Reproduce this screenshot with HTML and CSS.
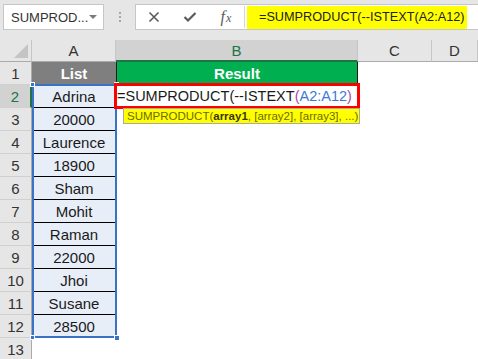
FILE: index.html
```html
<!DOCTYPE html>
<html lang="en">
<head>
    <meta charset="UTF-8">
    <title>SUMPRODUCT ISTEXT</title>
    <link rel="stylesheet" href="styles.css">
</head>
<body>

    <div class="toolbar">
        <div class="name-box">SUMPROD...<span class="caret"></span></div>
        <div class="grip"><span></span><span></span><span></span></div>
        <div class="formula-box">
            <div class="fx-btn">
                <svg width="12" height="12" viewBox="0 0 12 12"><path d="M1.5 1.5 L10.5 10.5 M10.5 1.5 L1.5 10.5" stroke="#5a5a5a" stroke-width="1.6" fill="none"/></svg>
            </div>
            <div class="fx-btn">
                <svg width="14" height="12" viewBox="0 0 14 12"><path d="M1.5 6 L5 9.5 L12.5 2" stroke="#5a5a5a" stroke-width="2.2" fill="none"/></svg>
            </div>
            <div class="fx-btn fx-text"><i>f</i><i class="sub">x</i></div>
            <div class="sep"></div>
            <div class="formula-hl">=SUMPRODUCT(--ISTEXT(A2:A12)</div>
        </div>
    </div>

    <div class="sheet">
        <div class="corner"></div>
        <div class="col-head">A</div>
        <div class="col-head active">B</div>
        <div class="col-head">C</div>
        <div class="col-head">D</div>

        <div class="row-head">1</div>
        <div class="cell head-grey">List</div>
        <div class="cell head-green">Result</div>
        <div class="cell"></div>
        <div class="cell"></div>

        <div class="row-head active">2</div>
        <div class="cell list">Adrina</div>
        <div class="cell editing">
            <span>=SUMPRODUCT(--ISTEXT<span class="paren">(</span><span class="ref">A2:A12</span><span class="paren">)</span></span>
            <div class="tip">SUMPRODUCT(<b>array1</b>, [array2], [array3], ...)</div>
        </div>
        <div class="cell"></div>
        <div class="cell"></div>

        <div class="row-head">3</div>
        <div class="cell list">20000</div>
        <div class="cell"></div><div class="cell"></div><div class="cell"></div>

        <div class="row-head">4</div>
        <div class="cell list">Laurence</div>
        <div class="cell"></div><div class="cell"></div><div class="cell"></div>

        <div class="row-head">5</div>
        <div class="cell list">18900</div>
        <div class="cell"></div><div class="cell"></div><div class="cell"></div>

        <div class="row-head">6</div>
        <div class="cell list">Sham</div>
        <div class="cell"></div><div class="cell"></div><div class="cell"></div>

        <div class="row-head">7</div>
        <div class="cell list">Mohit</div>
        <div class="cell"></div><div class="cell"></div><div class="cell"></div>

        <div class="row-head">8</div>
        <div class="cell list">Raman</div>
        <div class="cell"></div><div class="cell"></div><div class="cell"></div>

        <div class="row-head">9</div>
        <div class="cell list">22000</div>
        <div class="cell"></div><div class="cell"></div><div class="cell"></div>

        <div class="row-head">10</div>
        <div class="cell list">Jhoi</div>
        <div class="cell"></div><div class="cell"></div><div class="cell"></div>

        <div class="row-head">11</div>
        <div class="cell list">Susane</div>
        <div class="cell"></div><div class="cell"></div><div class="cell"></div>

        <div class="row-head">12</div>
        <div class="cell list">28500</div>
        <div class="cell"></div><div class="cell"></div><div class="cell"></div>

        <div class="row-head">13</div>
        <div class="cell"></div>
        <div class="cell"></div><div class="cell"></div><div class="cell"></div>

        <!-- range reference highlight A2:A12 -->
        <div class="range">
            <span class="handle tl"></span>
            <span class="handle tr"></span>
            <span class="handle bl"></span>
            <span class="handle br"></span>
        </div>
    </div>

</body>
</html>
```

FILE: styles.css
```css
* {
    box-sizing: border-box;
}

body {
    margin: 0;
    width: 478px;
    height: 359px;
    overflow: hidden;
    background-color: #ffffff;
    font-family: 'Liberation Sans', Arial, sans-serif;
    color: #1a1a1a;
}

/* formula bar */
.toolbar {
    height: 40px;
    background-color: #e6e6e6;
    display: flex;
    align-items: flex-start;
    padding-top: 4px;
}

.name-box {
    margin-left: 3px;
    width: 101px;
    height: 26px;
    background-color: #fff;
    border: 1px solid #c6c6c6;
    display: flex;
    align-items: center;
    padding-left: 7px;
    font-size: 13px;
    color: #333;
}

.caret {
    margin-left: auto;
    margin-right: 6px;
    border-left: 4px solid transparent;
    border-right: 4px solid transparent;
    border-top: 4px solid #7a7a7a;
}

.grip {
    width: 31px;
    height: 26px;
    display: flex;
    flex-direction: column;
    align-items: center;
    justify-content: center;
    gap: 2px;
}

.grip span {
    width: 2px;
    height: 2px;
    background-color: #a6a6a6;
}

.formula-box {
    flex: 1;
    height: 26px;
    background-color: #fff;
    border: 1px solid #c6c6c6;
    border-right: none;
    display: flex;
    align-items: center;
}

.fx-btn {
    width: 36px;
    height: 24px;
    display: flex;
    align-items: center;
    justify-content: center;
}

.fx-text {
    font-family: 'Liberation Serif', 'Times New Roman', serif;
    font-size: 16px;
    color: #5a5a5a;
}

.fx-text .sub {
    font-size: 12px;
    margin-top: 3px;
    margin-left: 1px;
}

.sep {
    width: 1px;
    height: 22px;
    background-color: #d4d4d4;
}

.formula-hl {
    margin-left: 2px;
    width: 220px;
    height: 23px;
    background-color: #ffff00;
    padding-left: 12px;
    font-size: 12.7px;
    line-height: 23px;
    color: #222;
    white-space: nowrap;
}

/* grid */
.sheet {
    position: relative;
    display: grid;
    grid-template-columns: 32px 84px 242px 74px 1fr;
    grid-template-rows: 22px repeat(13, 23px);
}

.corner {
    background-color: #e6e6e6;
    border-right: 1px solid #c6c6c6;
    border-bottom: 1px solid #ababab;
    position: relative;
}

.corner::after {
    content: '';
    position: absolute;
    right: 3px;
    bottom: 3px;
    width: 14px;
    height: 14px;
    background-color: #c4c4c4;
    clip-path: polygon(100% 0, 100% 100%, 0 100%);
}

.col-head {
    background-color: #e6e6e6;
    border-right: 1px solid #c6c6c6;
    border-bottom: 1px solid #ababab;
    display: flex;
    align-items: center;
    justify-content: center;
    font-size: 15px;
    color: #333;
}

.col-head.active {
    background-color: #d2d2d2;
    color: #217346;
    border-bottom: 2px solid #217346;
}

.row-head {
    background-color: #e6e6e6;
    border-right: 1px solid #ababab;
    border-bottom: 1px solid #d0d0d0;
    display: flex;
    align-items: center;
    justify-content: center;
    font-size: 15px;
    color: #333;
}

.row-head.active {
    background-color: #d2d2d2;
    color: #217346;
    border-right: 2px solid #217346;
}

.cell {
    display: flex;
    align-items: center;
    justify-content: center;
    font-size: 15px;
}

.cell.list {
    background-color: #e8eef8;
    border-bottom: 1px solid #000;
}

.cell.head-grey {
    background-color: #7f7f7f;
    color: #fff;
    font-weight: bold;
}

.cell.head-green {
    background-color: #00b050;
    color: #fff;
    font-weight: bold;
    border-left: 1px solid #1a1a1a;
    border-right: 1px solid #1a1a1a;
}

.cell.editing {
    position: relative;
    z-index: 2;
    margin: -2px -2px -1px -2px;
    border: 3px solid #ff0000;
    background-color: #fff;
    justify-content: flex-start;
    font-size: 14.5px;
    white-space: nowrap;
}

.paren {
    color: #b0479e;
}

.ref {
    color: #3c78d8;
}

.tip {
    position: absolute;
    top: calc(100% + 2px);
    left: 6px;
    width: 237px;
    height: 16px;
    background-color: #ffff00;
    border: 1px solid #a8a8a8;
    padding-left: 3px;
    font-size: 11.5px;
    line-height: 14px;
    color: #6b6b00;
    white-space: nowrap;
}

.tip b {
    color: #3a3a00;
}

/* range highlight */
.range {
    position: absolute;
    left: 32px;
    top: 44px;
    width: 85px;
    height: 254px;
    border: 2px solid #3a72c6;
    pointer-events: none;
    z-index: 1;
}

.handle {
    position: absolute;
    width: 5px;
    height: 5px;
    background-color: #3a72c6;
    border: 1px solid #fff;
}

.handle.tl { left: -4px; top: -4px; }
.handle.tr { right: -4px; top: -4px; }
.handle.bl { left: -4px; bottom: -4px; }
.handle.br { right: -5px; bottom: -5px; width: 6px; height: 6px; }
```
